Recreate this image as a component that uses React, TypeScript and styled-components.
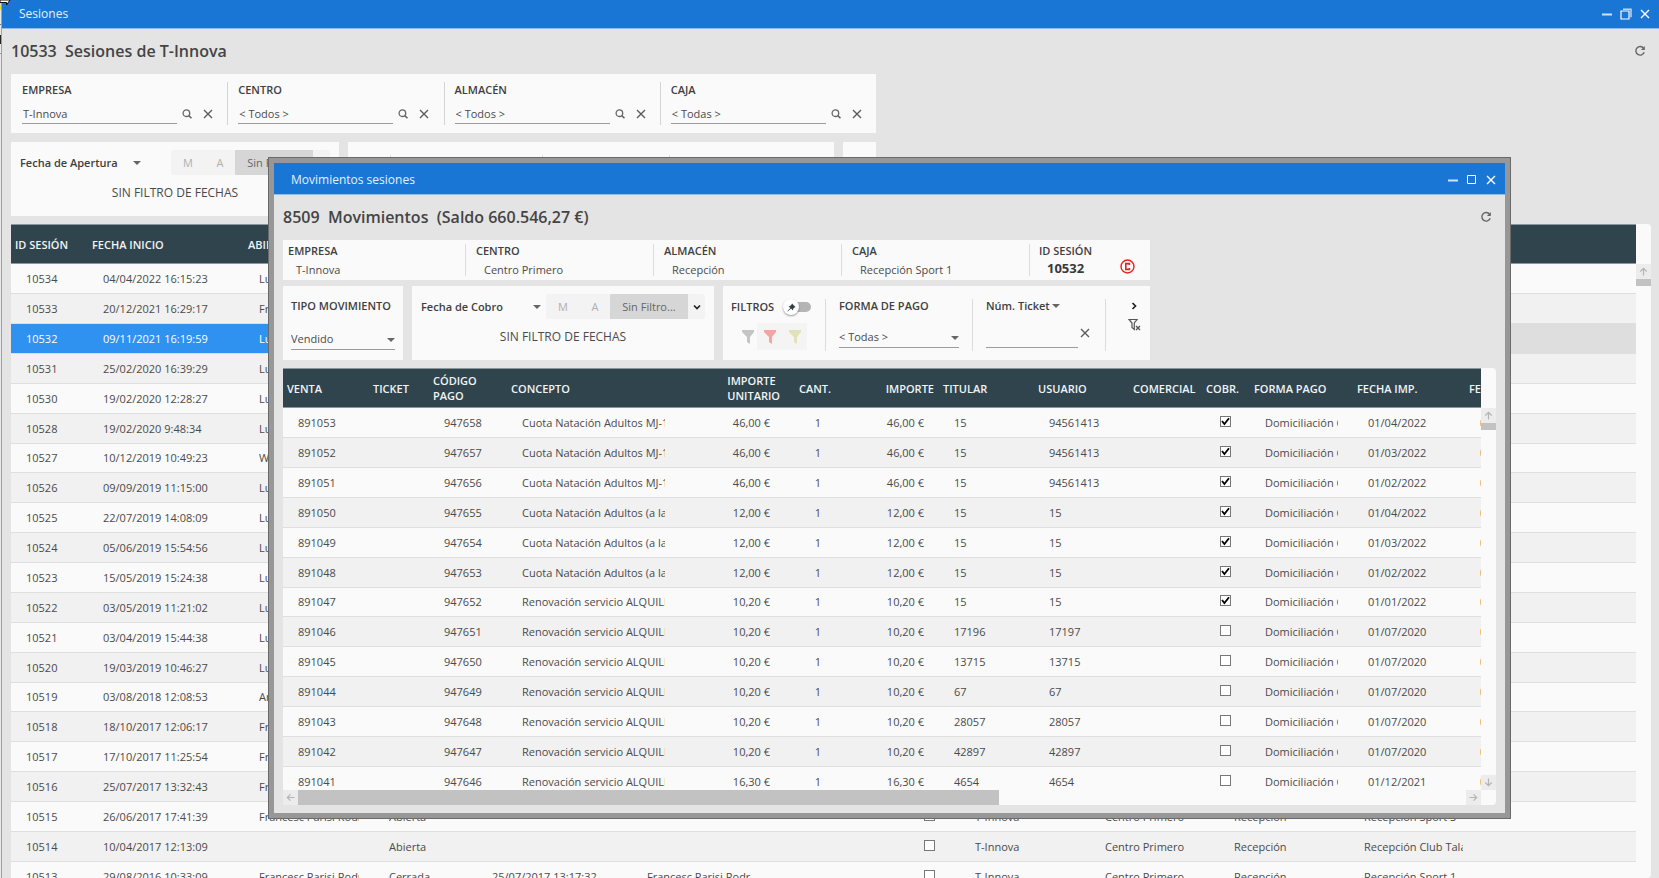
import React from "react";
import styled, { createGlobalStyle, css } from "styled-components";

const Global = createGlobalStyle`
  *, *::before, *::after { box-sizing: border-box; }
  html, body, #root { height: 100%; margin: 0; }
  body { font-family: "Open Sans", "Noto Sans", sans-serif; font-size: 11px; line-height: 14px; color: #4a4a4a; background: #e4e4e4; overflow: hidden; }
  button, input, select { font: inherit; color: inherit; border: 0; padding: 0; margin: 0; background: none; border-radius: 0; }
  h1, h2 { margin: 0; }
  svg { display: block; }
`;

const Desktop = styled.div`
  position: relative;
  height: 100%;
  overflow: hidden;
  display: flex;
`;
const Edge = styled.div`
  flex: none;
  width: 2px;
  background: linear-gradient(#d8d8d8 6px, #e6e13a 6px 10px, #e9e9e9 10px 24px, #777 24px 25px, #e9e9e9 25px 35px, #222 35px 44px, #e9e9e9 44px 53px, #999 53px 54px, #e9e9e9 54px);
  border-right: 1px solid #a0a0a0;
`;
const Pointer = styled.svg`
  position: absolute;
  left: 0;
  top: 0;
  z-index: 3;
`;
const Main = styled.main`
  flex: 1;
  min-width: 0;
  display: flex;
  flex-direction: column;
`;
const Dialog = styled.section`
  position: absolute;
  z-index: 2;
  top: 157px;
  right: 148px;
  bottom: 59px;
  left: 268px;
  display: flex;
  flex-direction: column;
  background: #e4e4e4;
  border: 1px solid #6a6a6a;
  outline: 5px solid #979797;
  outline-offset: -6px;
  padding: 5px;
`;
const TitleBar = styled.header<{ $h: number; $top?: number }>`
  flex: none;
  height: ${(p) => p.$h}px;
  display: flex;
  align-items: center;
  justify-content: space-between;
  padding: ${(p) => p.$top ?? 0}px 8px 0 17px;
  background: #1976d4;
  color: #e6f1fc;
  font-size: 12px;
  border-bottom: 1px solid #8dbbea;
`;
const WinButtons = styled.div`
  display: flex;
  gap: 7px;
  button { width: 12px; height: 12px; }
`;
const Heading = styled.div<{ $h: number }>`
  flex: none;
  height: ${(p) => p.$h}px;
  display: flex;
  align-items: center;
  justify-content: space-between;
  padding: 0 13px 2px 9px;
  h1 { font-size: 16px; line-height: 22px; font-weight: 600; color: #444; white-space: pre; }
`;
const Bar = styled.div<{ $w: number; $h: number; $mb: number }>`
  flex: none;
  display: flex;
  gap: 9px;
  width: ${(p) => p.$w}px;
  height: ${(p) => p.$h}px;
  margin: 0 0 ${(p) => p.$mb}px 9px;
`;
const Panel = styled.div<{ $w?: number }>`
  ${(p) => (p.$w ? css`flex: none; width: ${p.$w}px;` : css`flex: 1;`)}
  min-width: 0;
  background: #fafafa;
  display: flex;
`;
const Label = styled.label`
  font-weight: 600;
  color: #3f3f3f;
  white-space: nowrap;
`;
const LookupCell = styled.div`
  flex: 1;
  margin: 8px 0;
  padding: 1px 11px 0 10px;
  border-left: 1px solid #d4d4d4;
  &:first-child { border-left-color: transparent; }
  > ${Label} { display: block; }
`;
const LookupLine = styled.div`
  display: flex;
  align-items: center;
  gap: 9px;
  margin-top: 7px;
  input { width: 155px; height: 20px; padding: 0 0 1px 1px; margin-right: -5px; border-bottom: 1px solid #9c9c9c; min-width: 0; }
  button { width: 12px; height: 12px; }
`;
const DateStack = styled.div`
  flex: 1;
  min-width: 0;
  display: flex;
  flex-direction: column;
  padding: 8px 9px;
`;
const DateTop = styled.div`
  display: flex;
  align-items: center;
  justify-content: space-between;
`;
const DateNote = styled.div`
  text-align: center;
  font-size: 12px;
  font-weight: 500;
  margin-top: 11px;
  color: #4a4a4a;
`;
const Picker = styled.div<{ $w: number }>`
  position: relative;
  width: ${(p) => p.$w}px;
  flex: none;
  svg { position: absolute; right: 0; top: 0; bottom: 0; margin: auto 0; pointer-events: none; }
`;
const Select = styled.select<{ $bold?: boolean; $line?: boolean }>`
  appearance: none;
  display: block;
  width: 100%;
  height: ${(p) => (p.$bold ? 14 : 20)}px;
  outline: none;
  font-weight: ${(p) => (p.$bold ? 600 : 400)};
  color: ${(p) => (p.$bold ? "#3f3f3f" : "#4a4a4a")};
  border-bottom: ${(p) => (p.$line ? "1px solid #9c9c9c" : "0")};
  padding-bottom: ${(p) => (p.$line ? 2 : 0)}px;
`;
const Segments = styled.div`
  display: flex;
  height: 25px;
  background: #f3f3f3;
  color: #b0b0b0;
  border-radius: 2px;
`;
const Segment = styled.button<{ $w: number; $on?: boolean }>`
  width: ${(p) => p.$w}px;
  display: grid;
  place-items: center;
  ${(p) => p.$on && css`background: #d6d6d6; color: #666;`}
`;
const InfoCell = styled.div<{ $w?: number }>`
  ${(p) => (p.$w ? css`width: ${p.$w}px;` : css`flex: 1;`)}
  margin: 4px 0;
  padding-left: 10px;
  border-left: 1px solid #dcdcdc;
  &:first-child { border-left: 0; padding-left: 5px; }
`;
const InfoValue = styled.div`
  padding: 5px 0 0 8px;
`;
const SessionCell = styled(InfoCell)`
  display: flex;
  align-items: flex-start;
  justify-content: space-between;
  padding-left: 9px;
  padding-right: 15px;
  strong { display: block; font-size: 13px; line-height: 20px; padding-left: 8px; color: #3a3a3a; }
  > svg { margin-top: 15px; }
`;
const Stack = styled.div<{ $w?: number }>`
  ${(p) => (p.$w ? css`width: ${p.$w}px;` : css`flex: 1;`)}
  padding: 0 13px 3px;
  margin: 13px 0 9px;
  display: flex;
  flex-direction: column;
  justify-content: space-between;
  border-left: 1px solid #dcdcdc;
  &:first-child { border-left: 0; padding: 0 8px 1px; }
`;
const Line = styled.div`
  display: flex;
  align-items: center;
  justify-content: space-between;
  padding-right: 6px;
`;
const Toggle = styled.label`
  position: relative;
  width: 28px;
  height: 16px;
  input { appearance: none; display: block; width: 24px; height: 10px; margin: 3px 0 0 4px; border-radius: 5px; background: #b5b5b5; }
  span { position: absolute; left: 0; top: 0; width: 16px; height: 16px; border-radius: 50%; background: #fff; box-shadow: 0 1px 2px rgba(0,0,0,.4); display: grid; place-items: center; }
`;
const Funnels = styled.div`
  display: flex;
  align-self: flex-end;
  margin-right: 10px;
  button { width: 25px; height: 27px; display: grid; place-items: center; background: #f4f4f4; }
  button:first-child { background: none; width: 18px; }
`;
const TicketLine = styled.div`
  display: flex;
  gap: 1px;
  input { width: 92px; height: 24px; border-bottom: 1px solid #9c9c9c; }
  button { padding-bottom: 6px; }
`;
const ToolStack = styled(Stack)`
  align-items: center;
  justify-content: flex-start;
  gap: 7px;
  padding: 2px 0 0 12px;
`;
const GridArea = styled.div<{ $mb: number; $mr: number }>`
  flex: 1;
  min-height: 0;
  display: flex;
  margin: 0 ${(p) => p.$mr}px ${(p) => p.$mb}px 9px;
  background: #fafafa;
  border-radius: 0 4px 4px 0;
`;
const GridBody = styled.div`
  flex: 1;
  min-width: 0;
  display: flex;
  flex-direction: column;
`;
const Clip = styled.div`
  flex: 1;
  min-height: 0;
  overflow: hidden;
`;
const Table = styled.table`
  width: 100%;
  table-layout: fixed;
  border-collapse: separate;
  border-spacing: 0;
`;
const Th = styled.th<{ $right?: boolean }>`
  height: 40px;
  padding: 0 5px 0 4px;
  background: #30444d;
  color: #f0f4f5;
  font-weight: 600;
  line-height: 15px;
  border-top: 1px solid #8b979c;
  border-bottom: 1px solid #8b979c;
  text-align: ${(p) => (p.$right ? "right" : "left")};
  white-space: pre;
  overflow: hidden;
  > span { display: inline-block; text-align: left; }
`;
const Tr = styled.tr<{ $on?: boolean }>`
  height: 30px;
  background: #fafafa;
  &:nth-child(even) { background: #f1f1f1; }
  &:nth-child(8n + 7) { height: 29px; }
  ${(p) => p.$on && css`&& { background: #dedede; }`}
`;
const Td = styled.td<{ $right?: boolean; $on?: boolean }>`
  padding: 0;
  border-bottom: 1px solid #dfdfdf;
  ${(p) => p.$on && css`background: #3092f0; color: #fff;`}
  > div {
    margin: 0 15px;
    overflow: hidden;
    white-space: nowrap;
    text-align: ${(p) => (p.$right ? "right" : "left")};
  }
  &:last-child > div { margin-right: 0; }
`;
const Tick = styled.input`
  appearance: none;
  display: block;
  width: 11px;
  height: 11px;
  margin: 0 0 3px 3px;
  border: 1px solid #777;
  background: #fff;
  &:checked { background: #fff url("data:image/svg+xml,%3Csvg xmlns='http://www.w3.org/2000/svg' viewBox='0 0 9 9'%3E%3Cpath d='M1 4l2.4 3L8 1.2' fill='none' stroke='%23000' stroke-width='1.8'/%3E%3C/svg%3E") center / 9px no-repeat; }
`;
const Hint = styled.span`
  display: block;
  width: 8px;
  height: 8px;
  border-radius: 3px;
  background: #f0bd7a;
`;
const Rail = styled.div`
  flex: none;
  width: 15px;
  padding-top: 40px;
  display: flex;
  flex-direction: column;
`;
const HRail = styled.div`
  flex: none;
  height: 15px;
  display: flex;
`;
const Arrow = styled.button`
  flex: none;
  width: 15px;
  height: 15px;
  background: #ececec;
  display: grid;
  place-items: center;
`;
const Thumb = styled.div<{ $vertical?: boolean }>`
  background: #c2c2c2;
  ${(p) => (p.$vertical ? css`height: 7px;` : css`flex: 3;`)}
`;
const Spacer = styled.div`
  flex: 2;
`;

const Minimise = () => <svg width="12" height="12"><path d="M1 6.5h10" stroke="#cfe3f8" strokeWidth="2" /></svg>;
const Maximise = () => <svg width="12" height="12"><path d="M1.5 1.5h8v8h-8z" fill="none" stroke="#fff" /></svg>;
const Restore = () => <svg width="12" height="12"><path d="M1 3h8v8h-8z" fill="none" stroke="#fff" strokeWidth="1.200" /><path d="M3 1.200h8v8" fill="none" stroke="#b9d7f5" strokeWidth="1.500" /></svg>;
const Cross = ({ c = "#5c5c5c" }: { c?: string }) => <svg width="12" height="12" viewBox="0 0 12 12"><path d="M2 2l8 8M10 2l-8 8" stroke={c} strokeWidth="1.4" /></svg>;
const Search = () => <svg width="12" height="12" viewBox="0 0 12 12"><circle cx="5.400" cy="5.200" r="3.300" fill="none" stroke="#666" strokeWidth="1.300" /><path d="M7.800 7.600L10.500 10.300" stroke="#666" strokeWidth="1.500" /></svg>;
const Reload = () => <svg width="12" height="12" viewBox="0 0 12 12"><path d="M9.600 3.200A4.300 4.300 0 1 0 10.200 7.300" fill="none" stroke="#666" strokeWidth="1.400" /><path d="M10.800 1v4H6.900z" fill="#666" /></svg>;
const Caret = () => <svg width="8" height="4" viewBox="0 0 8 4"><path d="M0 0h8L4 4z" fill="#666" /></svg>;
const Chevron = ({ side }: { side?: boolean }) => <svg width="10" height="10" viewBox="0 0 10 10"><path d={side ? "M3.500 2L6.500 5 3.500 8" : "M2 3.500L5 6.500 8 3.500"} fill="none" stroke="#222" strokeWidth="1.700" /></svg>;
const Funnel = ({ c }: { c: string }) => <svg width="12" height="14" viewBox="0 0 12 14"><path d="M0 0h12v2L8 7v7l-3-2V7L0 2z" fill={c} /></svg>;
const ClearFunnel = () => <svg width="13" height="13" viewBox="0 0 13 13"><path d="M1 1.500h8L6.300 5v6.500L4 9.500V5z" fill="none" stroke="#555" strokeWidth="1.200" /><path d="M8 8l4 4M12 8l-4 4" stroke="#555" strokeWidth="1.300" /></svg>;
const Pin = () => <svg width="9" height="9" viewBox="0 0 9 9"><path d="M5 .5L8.500 4l-1 .4-1.300 1.400-.2 1.700-2-1.900L.8 8.600.4 8.200 3.300 5 1.500 3.200l1.700-.2L4.600 1.600z" fill="#333f48" /></svg>;
const Closed = () => <svg width="15" height="15" viewBox="0 0 15 15"><circle cx="7.500" cy="7.500" r="6.500" fill="none" stroke="#e32222" strokeWidth="1.400" /><path d="M9.400 6V4.600H5.800v5.800h3.600V9" fill="none" stroke="#e32222" strokeWidth="1.600" /></svg>;
const arrows = { up: 0, right: 90, down: 180, left: 270 };
const ArrowIcon = ({ to }: { to: keyof typeof arrows }) => <svg width="9" height="9" viewBox="0 0 9 9"><path transform={`rotate(${arrows[to]} 4.500 4.500)`} d="M4.500 8.500V1.500M1.300 4.500L4.500 1.300 7.700 4.500" fill="none" stroke="#b4b4b4" strokeWidth="1.200" /></svg>;

const WindowControls = ({ restored }: { restored?: boolean }) => (
  <WinButtons>
    <button aria-label="Minimizar"><Minimise /></button>
    <button aria-label="Maximizar">{restored ? <Restore /> : <Maximise />}</button>
    <button aria-label="Cerrar"><Cross c="#fff" /></button>
  </WinButtons>
);

const Drop = ({ id, value, w, bold, line }: { id: string; value: string; w: number; bold?: boolean; line?: boolean }) => (
  <Picker $w={w}>
    <Select id={id} aria-label={bold ? "Campo" : undefined} $bold={bold} $line={line} defaultValue={value}><option>{value}</option></Select>
    <Caret />
  </Picker>
);

const DateFilter = ({ id, field, w }: { id: string; field: string; w: number }) => (
  <DateStack>
    <DateTop>
      <Drop id={id} value={field} w={w} bold />
      <Segments>
        <Segment $w={34}>M</Segment>
        <Segment $w={30}>A</Segment>
        <Segment $w={78} $on>Sin Filtro...</Segment>
        <Segment $w={17} aria-label="Más"><Chevron /></Segment>
      </Segments>
    </DateTop>
    <DateNote>SIN FILTRO DE FECHAS</DateNote>
  </DateStack>
);

type Col = { t: string; w?: number; right?: boolean };
type Cell = string | boolean | null;

const Grid = ({ cols, rows, selected, markLast }: { cols: Col[]; rows: Cell[][]; selected?: string; markLast?: boolean }) => (
  <Clip>
    <Table>
      <colgroup>{cols.map((c, i) => <col key={i} width={c.w} />)}</colgroup>
      <thead><tr>{cols.map((c, i) => <Th key={i} $right={c.right}><span>{c.t}</span></Th>)}</tr></thead>
      <tbody>
        {rows.map((r) => (
          <Tr key={String(r[0])} $on={r[0] === selected}>
            {cols.map((c, i) => (
              <Td key={i} $right={c.right} $on={r[0] === selected && i < 3}>
                <div>
                  {typeof r[i] === "boolean" ? <Tick type="checkbox" aria-label="Marcado" defaultChecked={r[i] as boolean} /> : r[i]}
                  {markLast && i === cols.length - 1 && <Hint />}
                </div>
              </Td>
            ))}
          </Tr>
        ))}
      </tbody>
    </Table>
  </Clip>
);

const sessionCols: Col[] = [
  { t: "ID SESIÓN", w: 77 }, { t: "FECHA INICIO", w: 156 }, { t: "ABIERTO", w: 130 }, { t: "", w: 103 }, { t: "", w: 155 },
  { t: "", w: 274 }, { t: "", w: 54 }, { t: "", w: 130 }, { t: "", w: 129 }, { t: "", w: 130 }, { t: "", w: 129 }, { t: "" },
];
const place = ["T-Innova", "Centro Primero", "Recepción"];
const sessions: Cell[][] = [
  ["10534", "04/04/2022 16:15:23", "Lu"], ["10533", "20/12/2021 16:29:17", "Fr"], ["10532", "09/11/2021 16:19:59", "Lu"],
  ["10531", "25/02/2020 16:39:29", "Lu"], ["10530", "19/02/2020 12:28:27", "Lu"], ["10528", "19/02/2020 9:48:34", "Lu"],
  ["10527", "10/12/2019 10:49:23", "W"], ["10526", "09/09/2019 11:15:00", "Lu"], ["10525", "22/07/2019 14:08:09", "Lu"],
  ["10524", "05/06/2019 15:54:56", "Lu"], ["10523", "15/05/2019 15:24:38", "Lu"], ["10522", "03/05/2019 11:21:02", "Lu"],
  ["10521", "03/04/2019 15:44:38", "Lu"], ["10520", "19/03/2019 10:46:27", "Lu"], ["10519", "03/08/2018 12:08:53", "An"],
  ["10518", "18/10/2017 12:06:17", "Fr"], ["10517", "17/10/2017 11:25:54", "Fr"], ["10516", "25/07/2017 13:32:43", "Fr"],
  ["10515", "26/06/2017 17:41:39", "Francesc Parisi Rodr", "Abierta", null, null, false, ...place, "Recepción Sport 3"],
  ["10514", "10/04/2017 12:13:09", null, "Abierta", null, null, false, ...place, "Recepción Club Tala"],
  ["10513", "29/08/2016 10:33:09", "Francesc Parisi Rodr", "Cerrada", "25/07/2017 13:17:32", "Francesc Parisi Rodr", false, ...place, "Recepción Sport 1"],
];

const moveCols: Col[] = [
  { t: "VENTA", w: 86 }, { t: "TICKET", w: 60 }, { t: "CÓDIGO\nPAGO", w: 78 }, { t: "CONCEPTO", w: 173 }, { t: "IMPORTE\nUNITARIO", w: 105, right: true },
  { t: "CANT.", w: 51, right: true }, { t: "IMPORTE", w: 103, right: true }, { t: "TITULAR", w: 95 }, { t: "USUARIO", w: 95 }, { t: "COMERCIAL", w: 73 },
  { t: "COBR.", w: 48 }, { t: "FORMA PAGO", w: 103 }, { t: "FECHA IMP.", w: 112 }, { t: "FE" },
];
const move = (n: number, concept: string, price: string, holder: string, user: string, paid: boolean, date: string): Cell[] =>
  [String(891053 - n), null, String(947658 - n), concept, price, "1", price, holder, user, null, paid, "Domiciliación C", date];
const swim = "Cuota Natación Adultos MJ-1";
const swimB = "Cuota Natación Adultos (a la";
const rent = "Renovación servicio ALQUILE";
const moves: Cell[][] = [
  move(0, swim, "46,00 €", "15", "94561413", true, "01/04/2022"),
  move(1, swim, "46,00 €", "15", "94561413", true, "01/03/2022"),
  move(2, swim, "46,00 €", "15", "94561413", true, "01/02/2022"),
  move(3, swimB, "12,00 €", "15", "15", true, "01/04/2022"),
  move(4, swimB, "12,00 €", "15", "15", true, "01/03/2022"),
  move(5, swimB, "12,00 €", "15", "15", true, "01/02/2022"),
  move(6, rent, "10,20 €", "15", "15", true, "01/01/2022"),
  move(7, rent, "10,20 €", "17196", "17197", false, "01/07/2020"),
  move(8, rent, "10,20 €", "13715", "13715", false, "01/07/2020"),
  move(9, rent, "10,20 €", "67", "67", false, "01/07/2020"),
  move(10, rent, "10,20 €", "28057", "28057", false, "01/07/2020"),
  move(11, rent, "10,20 €", "42897", "42897", false, "01/07/2020"),
  move(12, rent, "16,30 €", "4654", "4654", false, "01/12/2021"),
];

const lookups = [["EMPRESA", "T-Innova"], ["CENTRO", "< Todos >"], ["ALMACÉN", "< Todos >"], ["CAJA", "< Todas >"]];
const info = [["EMPRESA", "T-Innova"], ["CENTRO", "Centro Primero"], ["ALMACÉN", "Recepción"], ["CAJA", "Recepción Sport 1"]];

const MovementsDialog = () => (
  <Dialog role="dialog" aria-label="Movimientos sesiones">
    <TitleBar $h={32} $top={2}><span>Movimientos sesiones</span><WindowControls /></TitleBar>
    <Heading $h={45}><h1>8509  Movimientos  (Saldo 660.546,27 €)</h1><button aria-label="Actualizar"><Reload /></button></Heading>
    <Bar $w={867} $h={40} $mb={6}>
      <Panel>
        {info.map(([k, v], i) => <InfoCell key={k} $w={i ? 188 : 182}><Label as="div">{k}</Label><InfoValue>{v}</InfoValue></InfoCell>)}
        <SessionCell>
          <div><Label as="div">ID SESIÓN</Label><strong>10532</strong></div>
          <Closed />
        </SessionCell>
      </Panel>
    </Bar>
    <Bar $w={867} $h={74} $mb={8}>
      <Panel $w={120}>
        <Stack><Label htmlFor="tipo">TIPO MOVIMIENTO</Label><Drop id="tipo" value="Vendido" w={104} line /></Stack>
      </Panel>
      <Panel $w={302}><DateFilter id="cobro" field="Fecha de Cobro" w={120} /></Panel>
      <Panel>
        <Stack $w={102}>
          <Line><Label htmlFor="pin">FILTROS</Label><Toggle><input id="pin" type="checkbox" /><span><Pin /></span></Toggle></Line>
          <Funnels>
            <button aria-label="Filtro gris"><Funnel c="#c4c4c4" /></button>
            <button aria-label="Filtro rojo"><Funnel c="#f5a3a3" /></button>
            <button aria-label="Filtro verde"><Funnel c="#e2e2ba" /></button>
          </Funnels>
        </Stack>
        <Stack $w={147}><Label htmlFor="forma">FORMA DE PAGO</Label><Drop id="forma" value="< Todas >" w={120} line /></Stack>
        <Stack $w={133}>
          <Drop id="num" value="Núm. Ticket" w={74} bold />
          <TicketLine><input aria-label="Núm. Ticket" /><button aria-label="Borrar"><Cross /></button></TicketLine>
        </Stack>
        <ToolStack><button aria-label="Más filtros"><Chevron side /></button><button aria-label="Quitar filtros"><ClearFunnel /></button></ToolStack>
      </Panel>
    </Bar>
    <GridArea $mb={8} $mr={9}>
      <GridBody>
        <Grid cols={moveCols} rows={moves} markLast />
        <HRail>
          <Arrow aria-label="Izquierda"><ArrowIcon to="left" /></Arrow><Thumb /><Spacer /><Arrow aria-label="Derecha"><ArrowIcon to="right" /></Arrow>
        </HRail>
      </GridBody>
      <Rail>
        <Arrow aria-label="Arriba"><ArrowIcon to="up" /></Arrow><Thumb $vertical /><Spacer /><Arrow aria-label="Abajo"><ArrowIcon to="down" /></Arrow><HRail />
      </Rail>
    </GridArea>
  </Dialog>
);

export default function App() {
  return (
    <Desktop>
      <Global />
      <Edge />
      <Pointer width="12" height="6"><path d="M0 0h10L6.500 5V2.500H0z" fill="#fff" stroke="#111" /></Pointer>
      <Main>
        <TitleBar $h={29}><span>Sesiones</span><WindowControls restored /></TitleBar>
        <Heading $h={45}><h1>10533  Sesiones de T-Innova</h1><button aria-label="Actualizar"><Reload /></button></Heading>
        <Bar $w={865} $h={59} $mb={9}>
          <Panel>
            {lookups.map(([k, v]) => (
              <LookupCell key={k}>
                <Label htmlFor={k}>{k}</Label>
                <LookupLine>
                  <input id={k} defaultValue={v} />
                  <button aria-label={`Buscar ${k}`}><Search /></button>
                  <button aria-label={`Borrar ${k}`}><Cross /></button>
                </LookupLine>
              </LookupCell>
            ))}
          </Panel>
        </Bar>
        <Bar $w={865} $h={74} $mb={8}>
          <Panel $w={328}><DateFilter id="apertura" field="Fecha de Apertura" w={121} /></Panel>
          <Panel><Stack $w={42} /><Stack $w={152} /><Stack $w={127} /><Stack /></Panel>
          <Panel $w={33} />
        </Bar>
        <GridArea $mb={0} $mr={8}>
          <GridBody><Grid cols={sessionCols} rows={sessions} selected="10532" /></GridBody>
          <Rail><Arrow aria-label="Arriba"><ArrowIcon to="up" /></Arrow><Thumb $vertical /></Rail>
        </GridArea>
      </Main>
      <MovementsDialog />
    </Desktop>
  );
}
